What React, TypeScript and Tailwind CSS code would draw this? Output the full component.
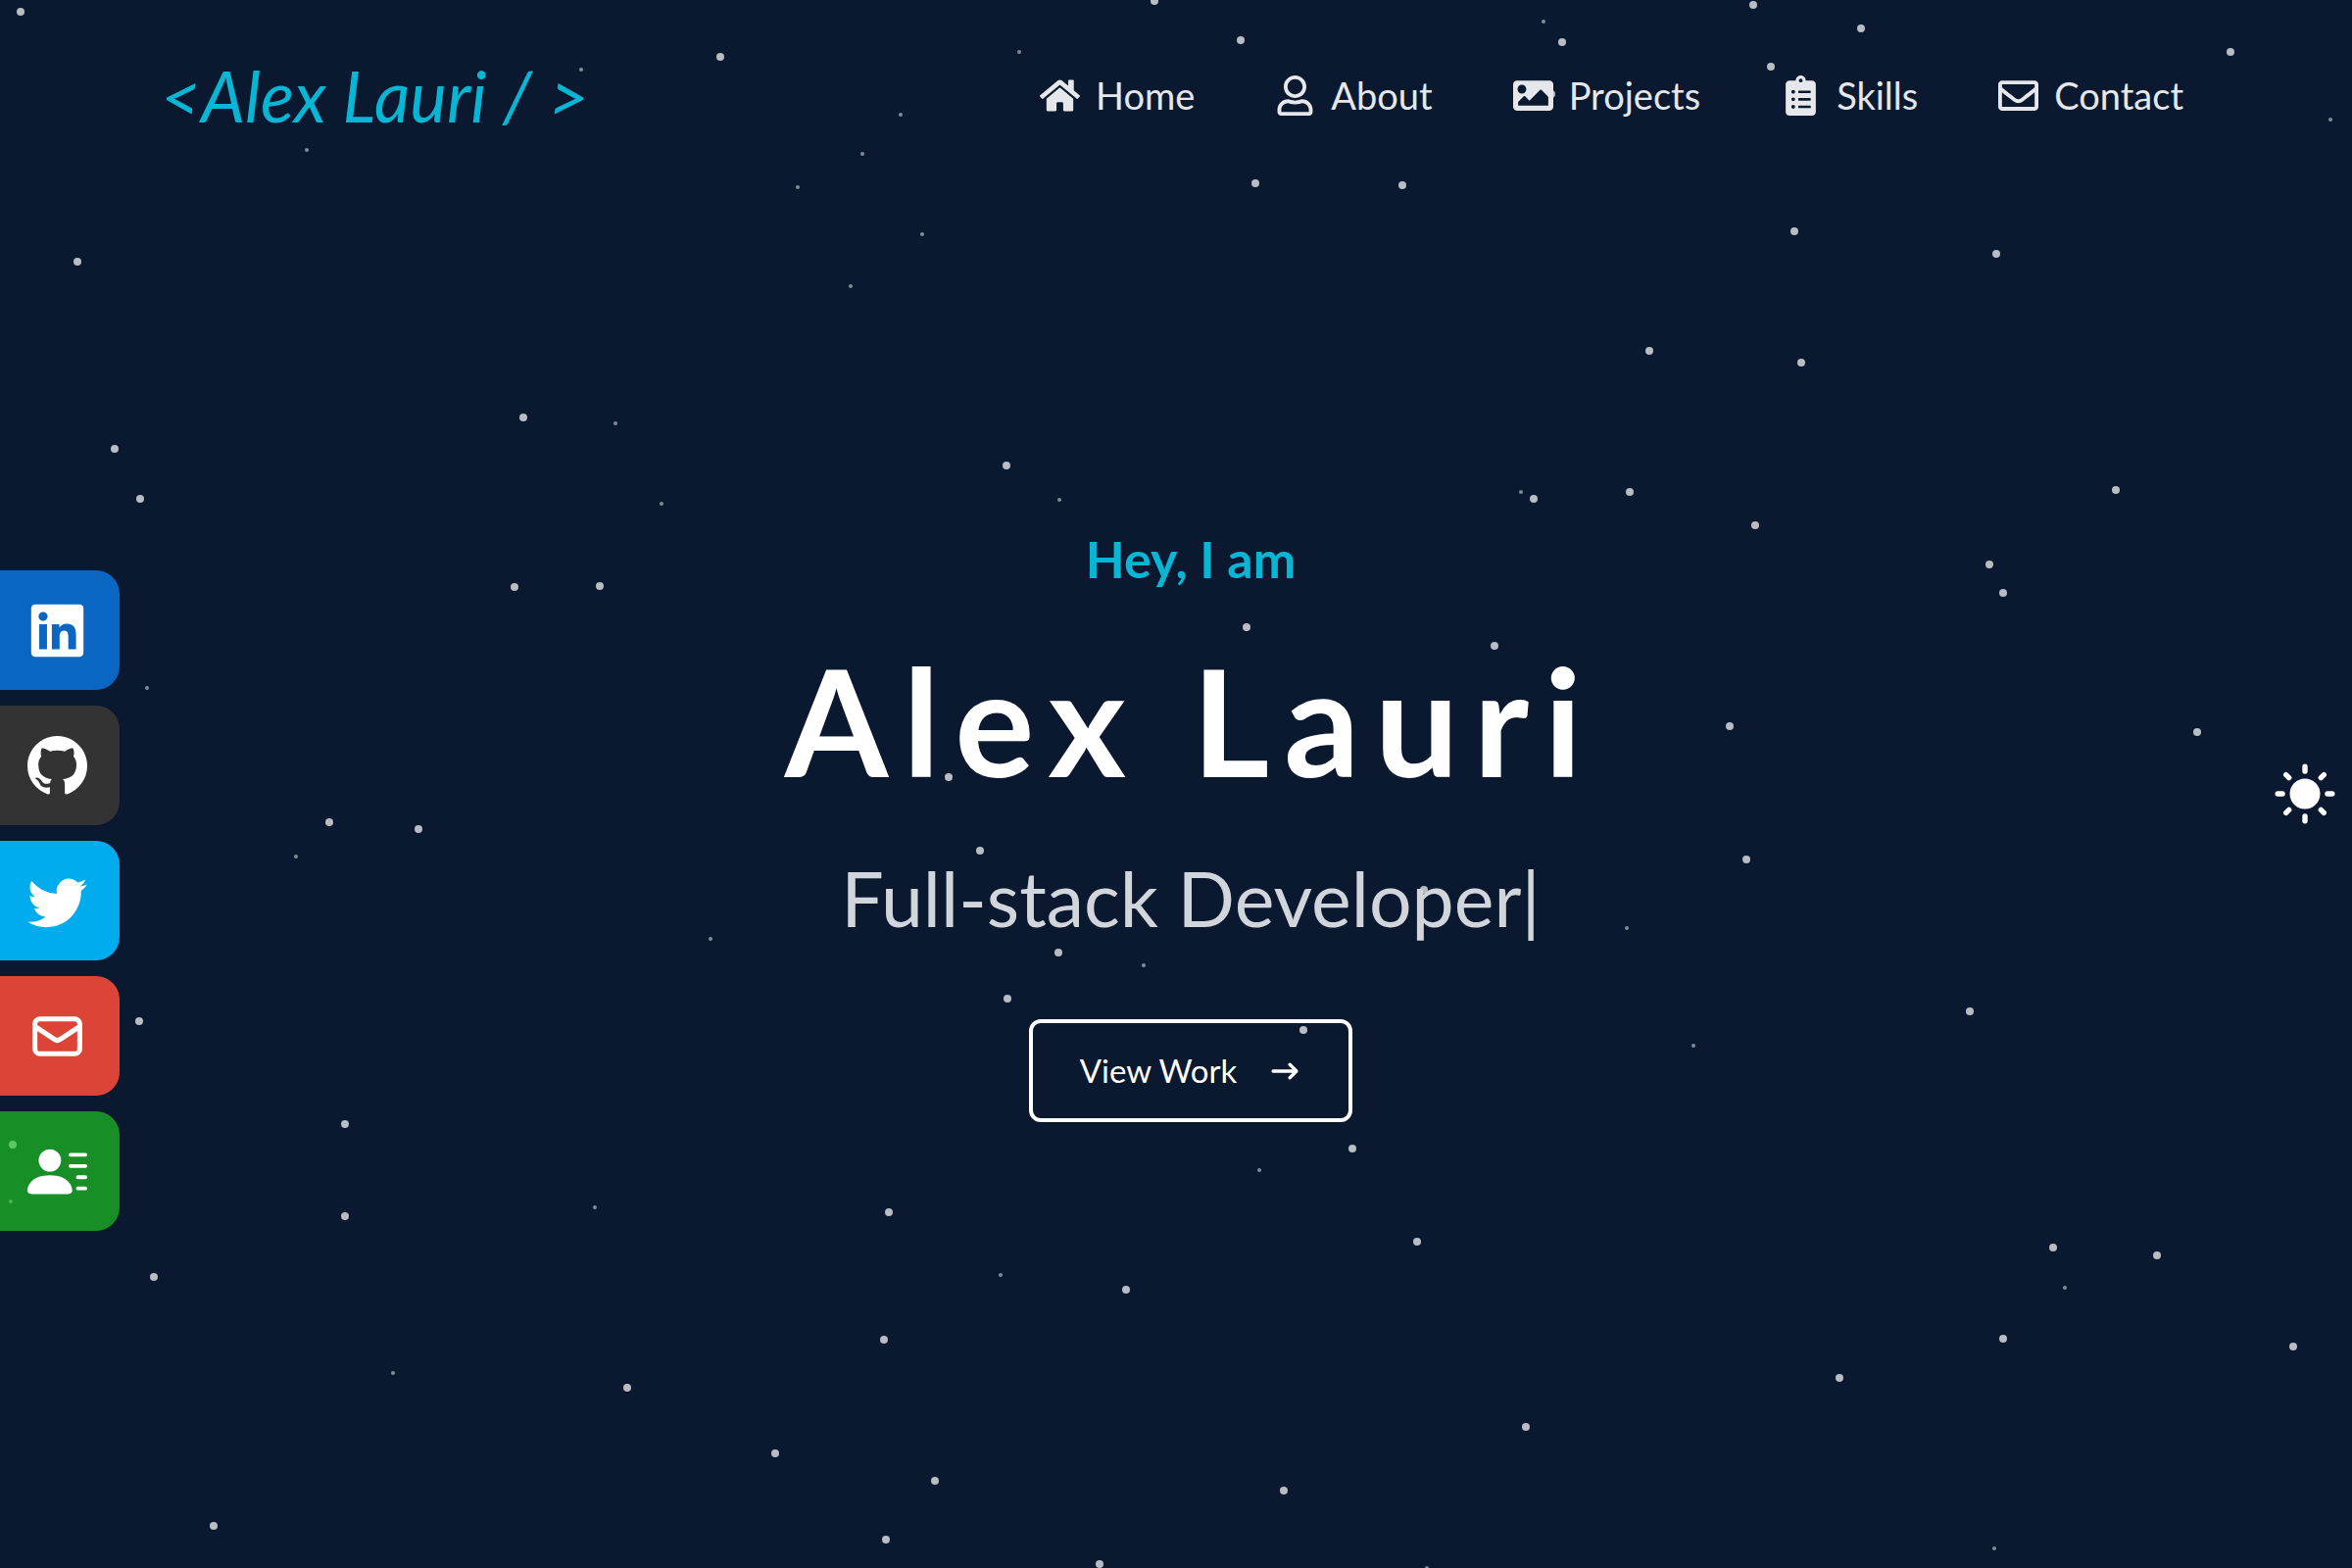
import React from "react";
import { FaHome, FaRegUser, FaImage, FaClipboardList, FaRegEnvelope, FaLinkedin } from "react-icons/fa";
import { BsGithub, BsTwitter, BsFillPersonLinesFill } from "react-icons/bs";
import { HiOutlineMail, HiArrowNarrowRight } from "react-icons/hi";

const NAV = [
  { label: "Home", Icon: FaHome },
  { label: "About", Icon: FaRegUser },
  { label: "Projects", Icon: FaImage },
  { label: "Skills", Icon: FaClipboardList },
  { label: "Contact", Icon: FaRegEnvelope },
];

const SOCIAL = [
  { label: "LinkedIn", Icon: FaLinkedin, color: "bg-[#0a66c2]" },
  { label: "GitHub", Icon: BsGithub, color: "bg-[#333333]" },
  { label: "Twitter", Icon: BsTwitter, color: "bg-[#00acee]" },
  { label: "Email", Icon: HiOutlineMail, color: "bg-[#db4437]" },
  { label: "Resume", Icon: BsFillPersonLinesFill, color: "bg-[#178e26]" },
];

const BIG_STARS: [number, number][] = [
  [21, 12], [735, 58], [1178, 1], [1266, 41], [1594, 43], [1789, 5], [1899, 29], [1807, 68], [2276, 53],
  [1281, 187], [1431, 189], [1831, 236], [2037, 259], [79, 267], [1683, 358], [1838, 370], [534, 426],
  [117, 458], [143, 509], [1027, 475], [1663, 502], [1565, 509], [2159, 500], [1791, 536], [2030, 576],
  [2044, 605], [525, 599], [612, 598], [1272, 640], [1525, 659], [1765, 741], [2242, 747], [336, 839],
  [427, 846], [968, 793], [1000, 868], [1782, 877], [1453, 908], [1080, 972], [1028, 1019], [2010, 1032],
  [142, 1042], [1330, 1051], [352, 1147], [1380, 1172], [352, 1241], [907, 1237], [1446, 1267], [2095, 1273],
  [2201, 1281], [157, 1303], [1149, 1316], [902, 1367], [2044, 1366], [2340, 1374], [640, 1416], [1583, 96],
  [1877, 1406], [1557, 1456], [791, 1483], [954, 1511], [1310, 1521], [218, 1557], [904, 1571], [1122, 1596],
];

const SMALL_STARS: [number, number][] = [
  [593, 71], [1040, 53], [1575, 22], [313, 153], [919, 117], [880, 157], [814, 191], [941, 239], [868, 292],
  [2378, 122], [628, 432], [675, 514], [1081, 510], [1552, 502], [150, 702], [302, 874], [725, 958],
  [1167, 985], [1660, 947], [1728, 1067], [607, 1232], [1285, 1194], [1021, 1301], [2107, 1314],
  [401, 1401], [2035, 1580], [1456, 1600],
];

function Stars() {
  return (
    <svg
      aria-hidden="true"
      viewBox="0 0 2400 1600"
      preserveAspectRatio="xMidYMid slice"
      className="pointer-events-none absolute inset-0 h-full w-full"
    >
      {BIG_STARS.map(([x, y]) => (
        <circle key={`${x}-${y}`} cx={x} cy={y} r="4" fill="#b8bdc4" />
      ))}
      {SMALL_STARS.map(([x, y]) => (
        <circle key={`${x}-${y}`} cx={x} cy={y} r="2" fill="#848c99" />
      ))}
    </svg>
  );
}

function SunIcon() {
  return (
    <svg aria-hidden="true" viewBox="-31 -31 62 62" className="size-[62px]">
      <circle r="15.5" fill="currentColor" />
      <path
        d="M0-27.8V-23M0 27.8V23M-27.8 0H-23M27.8 0H23M-19.3-19.3l3 3M19.3-19.3l-3 3M-19.3 19.3l3-3M19.3 19.3l-3-3"
        stroke="currentColor"
        strokeWidth="5.4"
        strokeLinecap="round"
      />
    </svg>
  );
}

export default function App() {
  return (
    <div className="relative flex min-h-screen flex-col overflow-hidden bg-[#0a192f] font-['Lato',sans-serif] text-white">
      <Stars />

      <header className="relative flex h-[194px] items-center justify-between pr-[172px] pl-[164px]">
        <a href="#home" className="text-[71px] leading-none text-[#06b6d4] italic">
          &lt;Alex Lauri / &gt;
        </a>
        <nav className="flex items-center gap-[82px] text-[38px] text-gray-200">
          {NAV.map(({ label, Icon }) => (
            <a key={label} href={`#${label.toLowerCase()}`} className="flex items-center gap-4">
              <Icon className="size-[41px]" />
              {label}
            </a>
          ))}
        </nav>
      </header>

      <main className="relative flex flex-1 flex-col items-center pt-[338px] pl-[30px]">
        <p className="text-[52px] leading-[76px] font-bold text-[#06b6d4]">Hey, I am</p>
        <h1 className="mt-4 text-[152px] leading-[220px] font-bold tracking-widest">Alex Lauri</h1>
        <h2 className="mt-4 text-[77px] leading-[112px] text-gray-300">Full-stack Developer|</h2>
        <button
          type="button"
          className="mt-[68px] flex h-[105px] items-center gap-8 rounded-xl border-4 border-white px-12 text-[33px]"
        >
          View Work
          <HiArrowNarrowRight className="size-[34px]" />
        </button>
      </main>

      <aside className="absolute top-[582px] left-0">
        <ul className="flex flex-col gap-4">
          {SOCIAL.map(({ label, Icon, color }) => (
            <li key={label}>
              <a
                href={`#${label.toLowerCase()}`}
                aria-label={label}
                className={`${color} relative flex h-[122px] w-[122px] items-center rounded-r-3xl pl-7`}
              >
                <Icon className="size-[61px]" />
                {label === "Resume" && (
                  <svg aria-hidden="true" viewBox="0 0 122 122" className="absolute inset-0 size-full">
                    <circle cx="13" cy="34" r="4" fill="#5bc962" />
                    <circle cx="11" cy="92" r="2" fill="#48b552" />
                  </svg>
                )}
              </a>
            </li>
          ))}
        </ul>
      </aside>

      <button type="button" aria-label="Switch to light theme" className="absolute top-[779px] right-[17px]">
        <SunIcon />
      </button>
    </div>
  );
}
